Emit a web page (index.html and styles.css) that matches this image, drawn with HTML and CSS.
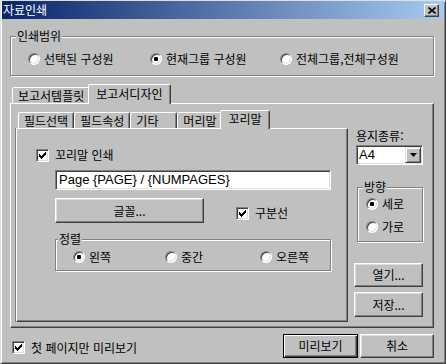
FILE: index.html
```html
<!DOCTYPE html>
<html lang="ko">
<head>
  <meta charset="UTF-8" />
  <title>자료인쇄</title>
  <link rel="stylesheet" href="styles.css">
</head>
<body>
  <div class="window">
    <div class="titlebar">
      <span class="title">자료인쇄</span>
      <span class="close">
        <svg width="8" height="7" viewBox="0 0 8 7"><path d="M0.5 0.5 L7.5 6.5 M7.5 0.5 L0.5 6.5" stroke="#000" stroke-width="1.6"/></svg>
      </span>
    </div>

    <div class="dialog">
      <div class="group range">
        <span class="legend">인쇄범위</span>
        <div class="range-options">
          <label class="opt"><span class="radio"></span>선택된 구성원</label>
          <label class="opt"><span class="radio on"></span>현재그룹 구성원</label>
          <label class="opt"><span class="radio"></span>전체그룹,전체구성원</label>
        </div>
      </div>

      <div class="tabstrip outer-tabs">
        <div class="tab">보고서템플릿</div>
        <div class="tab active">보고서디자인</div>
      </div>
      <div class="panel outer-panel">
        <div class="design">
          <div class="tabstrip inner-tabs">
            <div class="tab">필드선택</div>
            <div class="tab">필드속성</div>
            <div class="tab wide">기타</div>
            <div class="tab">머리말</div>
            <div class="tab active">꼬리말</div>
          </div>
          <div class="panel inner-panel">
            <label class="check print-footer">
              <span class="box"><svg width="7" height="7" viewBox="0 0 7 7" shape-rendering="crispEdges"><polygon points="0,2 1,2 1,3 2,3 2,4 3,4 3,3 4,3 4,2 5,2 5,1 6,1 6,0 7,0 7,3 6,3 6,4 5,4 5,5 4,5 4,6 3,6 3,7 2,7 2,6 1,6 1,5 0,5"/></svg></span>꼬리말 인쇄
            </label>
            <div class="field">Page {PAGE} / {NUMPAGES}</div>
            <div class="font-row">
              <div class="btn font-btn">글꼴...</div>
              <label class="check divider">
                <span class="box"><svg width="7" height="7" viewBox="0 0 7 7" shape-rendering="crispEdges"><polygon points="0,2 1,2 1,3 2,3 2,4 3,4 3,3 4,3 4,2 5,2 5,1 6,1 6,0 7,0 7,3 6,3 6,4 5,4 5,5 4,5 4,6 3,6 3,7 2,7 2,6 1,6 1,5 0,5"/></svg></span>구분선
              </label>
            </div>
            <div class="group align">
              <span class="legend">정렬</span>
              <div class="align-options">
                <label class="opt"><span class="radio on"></span>왼쪽</label>
                <label class="opt"><span class="radio"></span>중간</label>
                <label class="opt"><span class="radio"></span>오른쪽</label>
              </div>
            </div>
          </div>
        </div>

        <div class="side">
          <div class="side-label">용지종류:</div>
          <div class="combo">
            <span class="latin">A4</span>
            <span class="drop"><svg width="7" height="4" viewBox="0 0 7 4"><polygon points="0,0 7,0 3.5,4"/></svg></span>
          </div>
          <div class="group orient">
            <span class="legend">방향</span>
            <label class="opt"><span class="radio on"></span>세로</label>
            <label class="opt"><span class="radio"></span>가로</label>
          </div>
          <div class="btn side-btn">열기...</div>
          <div class="btn side-btn save">저장...</div>
        </div>
      </div>

      <div class="footer">
        <label class="check preview-first">
          <span class="box"><svg width="7" height="7" viewBox="0 0 7 7" shape-rendering="crispEdges"><polygon points="0,2 1,2 1,3 2,3 2,4 3,4 3,3 4,3 4,2 5,2 5,1 6,1 6,0 7,0 7,3 6,3 6,4 5,4 5,5 4,5 4,6 3,6 3,7 2,7 2,6 1,6 1,5 0,5"/></svg></span>첫 페이지만 미리보기
        </label>
        <div class="btn default">미리보기</div>
        <div class="btn cancel">취소</div>
      </div>
    </div>
  </div>
</body>
</html>
```

FILE: styles.css
```css
* {
  box-sizing: border-box;
}

body {
  margin: 0;
  background: #c0c0c0;
  font-family: "Noto Sans CJK KR", "Noto Sans", sans-serif;
  font-size: 12px;
  line-height: 14px;
  color: #000;
}

.window {
  width: 446px;
  height: 364px;
  padding: 0 1px 1px 1px;
  border: 1px solid;
  border-color: #dfdfdf #404040 #404040 #dfdfdf;
  box-shadow: inset 1px 1px #fff, inset -1px -1px #808080;
}

/* title bar */
.titlebar {
  height: 18px;
  display: flex;
  align-items: center;
  justify-content: space-between;
  padding: 0 5px 0 1px;
  background: linear-gradient(to right, #0a246a, #a6caf0);
}

.title {
  color: #fff;
}

.close {
  width: 15px;
  height: 13px;
  display: flex;
  align-items: center;
  justify-content: center;
  background: #c0c0c0;
  border: 1px solid;
  border-color: #fff #404040 #404040 #fff;
  box-shadow: inset -1px -1px #808080;
}

.dialog {
  padding: 17px 10px 0 8px;
}

/* etched group boxes */
.group {
  position: relative;
  border: 1px solid #808080;
  box-shadow: inset 1px 1px #fff, 1px 1px #fff;
}

.legend {
  position: absolute;
  top: -8px;
  left: 5px;
  padding: 0 1px;
  background: #c0c0c0;
}

.range {
  height: 40px;
  padding: 15px 0 0 17px;
}

.range-options {
  display: grid;
  grid-template-columns: 122px 130px auto;
}

.opt {
  display: flex;
  align-items: center;
  gap: 4px;
  height: 14px;
  white-space: nowrap;
}

.radio {
  width: 12px;
  height: 12px;
  flex: none;
  position: relative;
  border-radius: 50%;
  background: #fff;
  border: 1px solid;
  border-color: #808080 #fff #fff #808080;
  box-shadow: inset 1px 1px #404040, inset -1px -1px #dfdfdf;
}

.radio.on::after {
  content: "";
  position: absolute;
  left: 3px;
  top: 3px;
  width: 4px;
  height: 4px;
  border-radius: 1px;
  background: #000;
}

.check {
  display: flex;
  align-items: center;
  gap: 6px;
  height: 14px;
  white-space: nowrap;
}

.box {
  width: 13px;
  height: 13px;
  flex: none;
  display: flex;
  align-items: center;
  justify-content: center;
  background: #fff;
  border: 1px solid;
  border-color: #808080 #fff #fff #808080;
  box-shadow: inset 1px 1px #404040, inset -1px -1px #dfdfdf;
}

/* tabs */
.tabstrip {
  display: flex;
  align-items: flex-end;
  padding-left: 2px;
}

.outer-tabs {
  margin-top: 8px;
  height: 19px;
}

.inner-tabs {
  height: 18px;
}

.tab {
  height: 16px;
  display: flex;
  align-items: center;
  padding: 0 5px;
  white-space: nowrap;
  border: 1px solid;
  border-bottom: 0;
  border-color: #fff #404040 transparent #fff;
  border-radius: 2px 2px 0 0;
  box-shadow: inset -1px 0 #808080;
  background: #c0c0c0;
}

.tab.wide {
  width: 47px;
}

.tab.active {
  position: relative;
  z-index: 1;
  margin: 0 -2px -1px;
  padding: 0 7px 2px;
}

.outer-tabs .tab.active {
  height: 20px;
}

.inner-tabs .tab.active {
  height: 19px;
}

.panel {
  border: 1px solid;
  border-color: #fff #404040 #404040 #fff;
  box-shadow: inset -1px -1px #808080;
}

.outer-panel {
  height: 225px;
  display: flex;
  padding: 6px 0 0 5px;
}

.design {
  width: 332px;
}

.inner-panel {
  height: 194px;
  padding: 19px 16px 0 38px;
  box-shadow: inset -1px -1px #808080, -1px 0 #808080;
}

.print-footer {
  margin-left: -19px;
}

.field {
  margin-top: 8px;
  height: 20px;
  padding: 1px 3px;
  font-family: "Liberation Sans", Arial, sans-serif;
  font-size: 13px;
  line-height: 16px;
  background: #fff;
  border: 1px solid;
  border-color: #808080 #fff #fff #808080;
  box-shadow: inset 1px 1px #404040, inset -1px -1px #dfdfdf;
  white-space: nowrap;
}

.latin {
  font-family: "Liberation Sans", Arial, sans-serif;
  font-size: 13px;
}

.font-row {
  display: flex;
  margin-top: 8px;
}

.btn {
  display: flex;
  align-items: center;
  justify-content: center;
  height: 24px;
  border: 1px solid;
  border-color: #fff #404040 #404040 #fff;
  box-shadow: inset -1px -1px #808080, inset 1px 1px #dfdfdf;
}

.font-btn {
  width: 149px;
  height: 25px;
}

.divider {
  margin: 8px 0 0 32px;
}

.align {
  margin-top: 16px;
  height: 32px;
  padding: 10px 0 0 17px;
}

.align .legend {
  left: 2px;
}

.align-options {
  display: grid;
  grid-template-columns: 92px 95px auto;
}

/* right column */
.side {
  width: 69px;
  margin-left: 6px;
}

.side-label {
  margin-top: 19px;
  padding-left: 2px;
}

.combo {
  display: flex;
  align-items: center;
  justify-content: space-between;
  width: 67px;
  height: 20px;
  margin: 2px 0 0 2px;
  padding: 1px 1px 1px 2px;
  background: #fff;
  border: 1px solid;
  border-color: #808080 #fff #fff #808080;
  box-shadow: inset 1px 1px #404040, inset -1px -1px #dfdfdf;
}

.drop {
  width: 16px;
  height: 16px;
  display: flex;
  align-items: center;
  justify-content: center;
  background: #c0c0c0;
  border: 1px solid;
  border-color: #dfdfdf #404040 #404040 #dfdfdf;
  box-shadow: inset 1px 1px #fff, inset -1px -1px #808080;
}

.orient {
  display: flex;
  flex-direction: column;
  gap: 9px;
  width: 66px;
  height: 55px;
  margin: 22px 0 0 3px;
  padding: 9px 0 0 8px;
}

.side-btn {
  margin-top: 21px;
}

.side-btn.save {
  margin-top: 5px;
  height: 25px;
}

/* bottom row */
.footer {
  display: flex;
  align-items: center;
  height: 24px;
  margin-top: 6px;
}

.preview-first {
  flex: 1;
  margin: 3px 0 0 2px;
}

.default {
  width: 75px;
  border-color: #000;
  box-shadow: inset 1px 1px #fff, inset -1px -1px #404040, inset -2px -2px #808080;
}

.cancel {
  width: 74px;
  margin-left: 2px;
}
```
